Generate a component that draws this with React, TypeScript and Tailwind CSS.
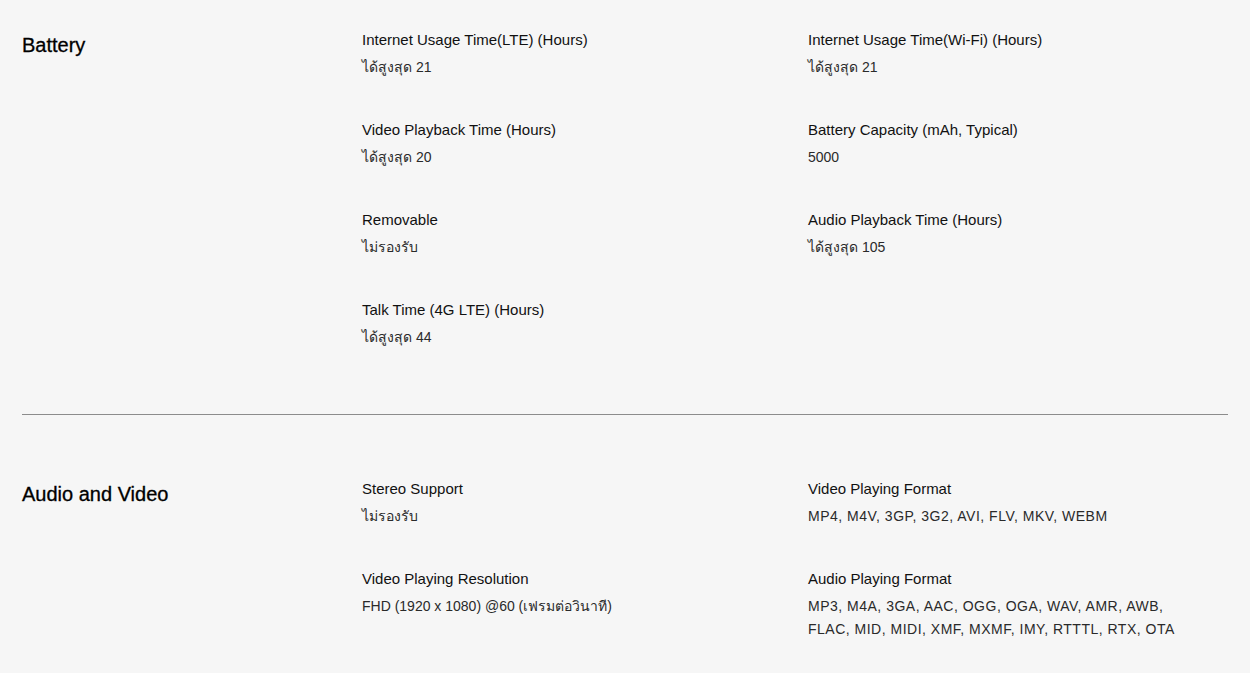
const sections = [
  {
    title: 'Battery',
    items: [
      { label: 'Internet Usage Time(LTE) (Hours)', value: 'ได้สูงสุด 21' },
      { label: 'Internet Usage Time(Wi-Fi) (Hours)', value: 'ได้สูงสุด 21' },
      { label: 'Video Playback Time (Hours)', value: 'ได้สูงสุด 20' },
      { label: 'Battery Capacity (mAh, Typical)', value: '5000' },
      { label: 'Removable', value: 'ไม่รองรับ' },
      { label: 'Audio Playback Time (Hours)', value: 'ได้สูงสุด 105' },
      { label: 'Talk Time (4G LTE) (Hours)', value: 'ได้สูงสุด 44' },
    ],
  },
  {
    title: 'Audio and Video',
    items: [
      { label: 'Stereo Support', value: 'ไม่รองรับ' },
      { label: 'Video Playing Format', value: 'MP4, M4V, 3GP, 3G2, AVI, FLV, MKV, WEBM', wide: true },
      { label: 'Video Playing Resolution', value: 'FHD (1920 x 1080) @60 (เฟรมต่อวินาที)' },
      {
        label: 'Audio Playing Format',
        value: 'MP3, M4A, 3GA, AAC, OGG, OGA, WAV, AMR, AWB, FLAC, MID, MIDI, XMF, MXMF, IMY, RTTTL, RTX, OTA',
        wide: true,
      },
    ],
  },
];

export default function App() {
  return (
    <div className="min-h-[673px] bg-[#f6f6f6] px-[22px] font-['Liberation_Sans','Noto_Sans',sans-serif] text-black">
      {sections.map((section, i) => (
        <div key={section.title}>
          {i > 0 && <div className="h-px bg-[#8c8c8c]" />}
          <div className={`grid grid-cols-[340px_446px_1fr] ${i === 0 ? 'pt-[30px] pb-[65px]' : 'pt-[64px] pb-[40px]'}`}>
            <h2 className="pt-[1px] text-[20px] leading-[28px] [-webkit-text-stroke:0.3px_black]">{section.title}</h2>
            <div className="col-span-2 grid grid-cols-[446px_1fr] gap-y-[41px]">
              {section.items.map((item) => (
                <div key={item.label}>
                  <div className="text-[15px] leading-[20px] text-[#111]">{item.label}</div>
                  <div
                    className={`mt-[6px] max-w-[380px] text-[14px] leading-[23px] text-[#2a2a2a] ${
                      item.wide ? 'tracking-[0.5px]' : ''
                    }`}
                  >
                    {item.value}
                  </div>
                </div>
              ))}
            </div>
          </div>
        </div>
      ))}
    </div>
  );
}
